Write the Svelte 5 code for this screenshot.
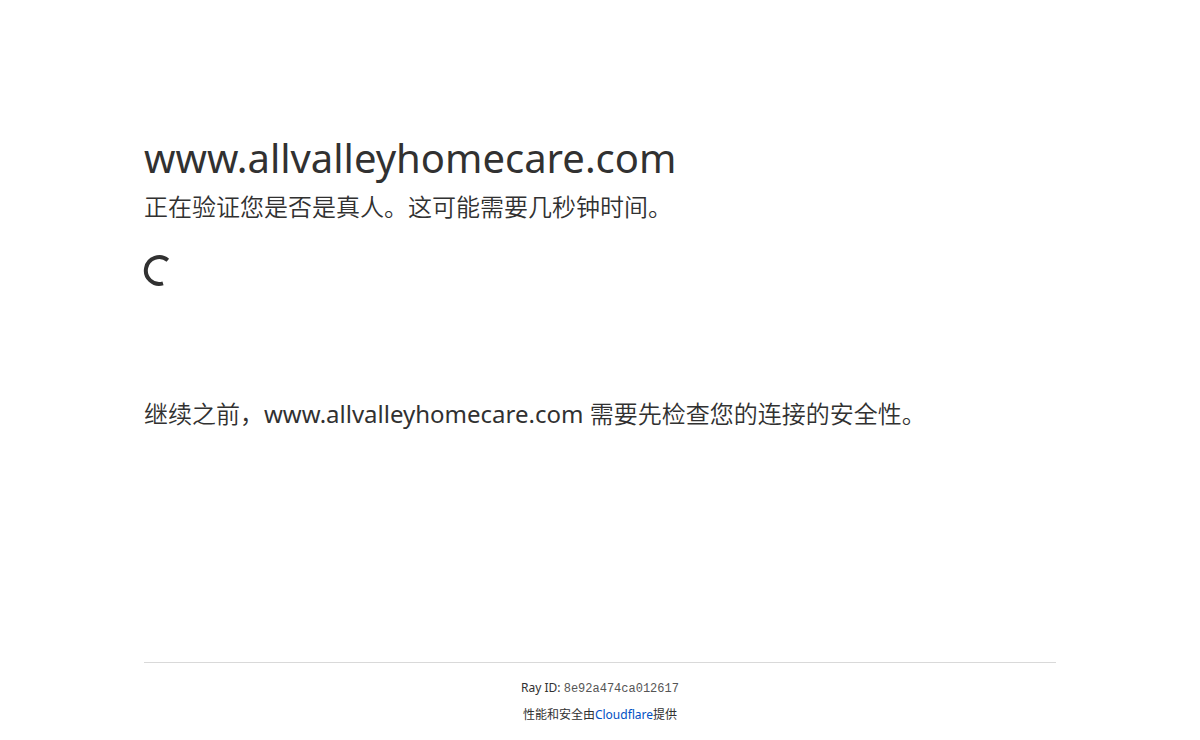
<script>
  const host = 'www.allvalleyhomecare.com';
  const rayId = '8e92a474ca012617';
</script>

<svelte:head>
  <title>{host}</title>
</svelte:head>

<div class="page">
  <main>
    <h1>{host}</h1>
    <p class="status">正在验证您是否是真人。这可能需要几秒钟时间。</p>
    <div class="spinner" role="status" aria-label="正在验证">
      <svg viewBox="0 0 32 32" aria-hidden="true">
        <path d="M23.8 6.2A13.4 13.4 0 1 0 19 29.4" />
      </svg>
    </div>
    <p class="notice">继续之前，<span>{host}</span> 需要先检查您的连接的安全性。</p>
  </main>
  <footer>
    <div>Ray ID: <code>{rayId}</code></div>
    <div>性能和安全由<a href="https://www.cloudflare.com">Cloudflare</a>提供</div>
  </footer>
</div>

<style>
  :global(body) {
    margin: 0;
    background: #fff;
  }
  .page {
    box-sizing: border-box;
    display: flex;
    flex-direction: column;
    min-height: 100vh;
    max-width: 960px;
    margin: 0 auto;
    padding: 128px 24px 0;
    color: #313131;
    font-family: "Noto Sans", "Noto Sans CJK SC", sans-serif;
  }
  main {
    flex: 1;
  }
  h1 {
    margin: 0;
    font-size: 40px;
    font-weight: 400;
    line-height: 60px;
  }
  p {
    margin: 0;
    font-size: 24px;
    font-weight: 350;
    line-height: 38px;
  }
  p span {
    font-weight: 400;
  }
  .spinner {
    height: 32px;
    margin: 28px 0 109px;
  }
  svg {
    display: block;
    width: 32px;
    height: 32px;
    fill: none;
    stroke: #313131;
    stroke-width: 4;
    overflow: visible;
  }
  footer {
    padding: 16px 0;
    border-top: 1px solid #d9d9d9;
    font-size: 12px;
    line-height: 18px;
    text-align: center;
  }
  footer div + div {
    margin-top: 8px;
  }
  code {
    color: #555;
    font-family: "Liberation Mono", monospace;
    font-size: 12px;
  }
  a {
    color: #0051c3;
    text-decoration: none;
  }
</style>
